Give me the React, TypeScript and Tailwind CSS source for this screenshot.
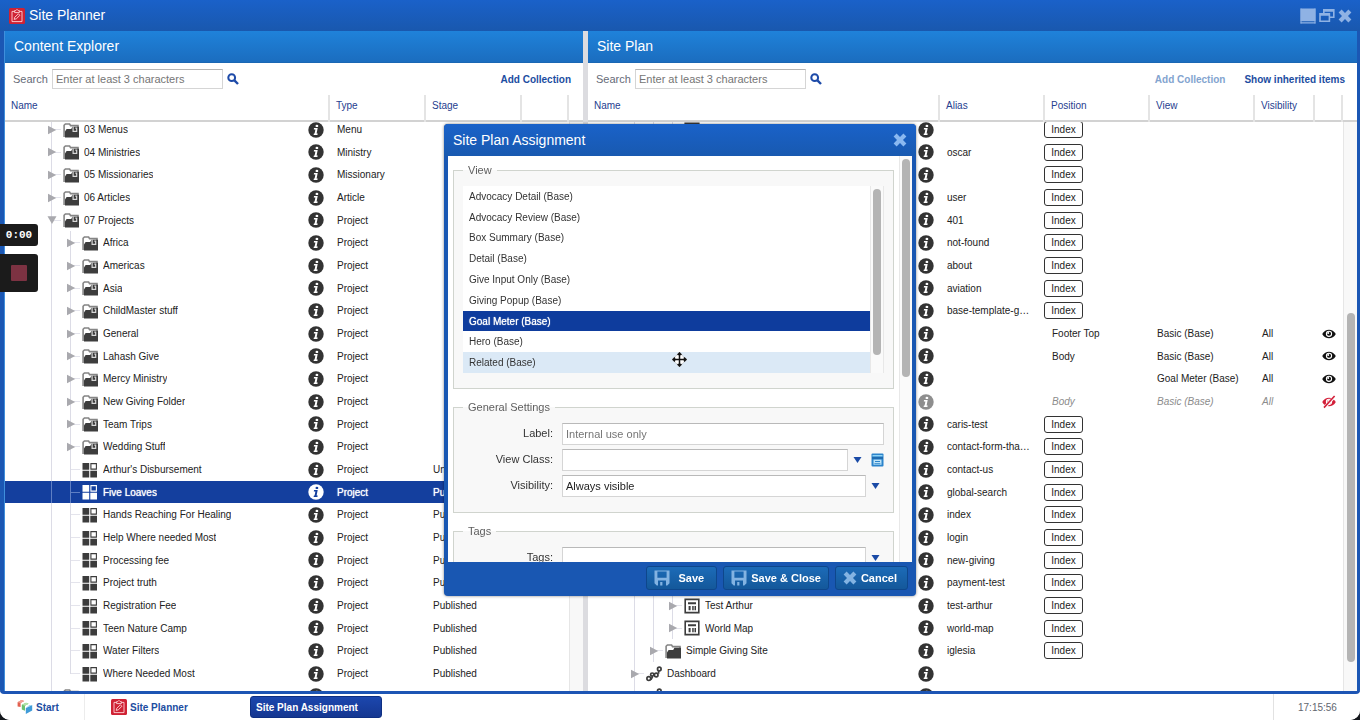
import { useState, type ReactNode } from 'react'

type IconKind = 'archive' | 'folder' | 'grid' | 'page' | 'path'

interface ContentItem {
  name: string
  type: string
  stage?: string
  depth: number
  icon: IconKind
  open?: boolean
}

interface PlanItem {
  name?: string
  depth?: number
  icon?: IconKind
  alias?: string
  index?: boolean
  position?: string
  view?: string
  hidden?: boolean
}

const folder = (name: string, type = 'Project', depth = 2, open = false): ContentItem => ({
  name,
  type,
  depth,
  icon: 'archive',
  open,
})

const project = (name: string, stage = 'Published'): ContentItem => ({
  name,
  type: 'Project',
  stage,
  depth: 2,
  icon: 'grid',
})

const contentItems: ContentItem[] = [
  folder('03 Menus', 'Menu', 1),
  folder('04 Ministries', 'Ministry', 1),
  folder('05 Missionaries', 'Missionary', 1),
  folder('06 Articles', 'Article', 1),
  folder('07 Projects', 'Project', 1, true),
  folder('Africa'),
  folder('Americas'),
  folder('Asia'),
  folder('ChildMaster stuff'),
  folder('General'),
  folder('Lahash Give'),
  folder('Mercy Ministry'),
  folder('New Giving Folder'),
  folder('Team Trips'),
  folder('Wedding Stuff'),
  project("Arthur's Disbursement", 'Unpublished'),
  project('Five Loaves'),
  project('Hands Reaching For Healing'),
  project('Help Where needed Most'),
  project('Processing fee'),
  project('Project truth'),
  project('Registration Fee'),
  project('Teen Nature Camp'),
  project('Water Filters'),
  project('Where Needed Most'),
  folder('', '', 1),
]

const planItems: PlanItem[] = [
  { index: true, depth: 3, icon: 'page' },
  { index: true, alias: 'oscar' },
  { index: true },
  { index: true, alias: 'user' },
  { index: true, alias: '401' },
  { index: true, alias: 'not-found' },
  { index: true, alias: 'about' },
  { index: true, alias: 'aviation' },
  { index: true, alias: 'base-template-g…' },
  { position: 'Footer Top', view: 'Basic (Base)' },
  { position: 'Body', view: 'Basic (Base)' },
  { view: 'Goal Meter (Base)' },
  { position: 'Body', view: 'Basic (Base)', hidden: true },
  { index: true, alias: 'caris-test' },
  { index: true, alias: 'contact-form-tha…' },
  { index: true, alias: 'contact-us' },
  { index: true, alias: 'global-search' },
  { index: true, alias: 'index' },
  { index: true, alias: 'login' },
  { index: true, alias: 'new-giving' },
  { index: true, alias: 'payment-test' },
  { index: true, alias: 'test-arthur', name: 'Test Arthur', depth: 3, icon: 'page' },
  { index: true, alias: 'world-map', name: 'World Map', depth: 3, icon: 'page' },
  { index: true, alias: 'iglesia', name: 'Simple Giving Site', depth: 2, icon: 'folder' },
  { name: 'Dashboard', depth: 1, icon: 'path' },
  { depth: 1, icon: 'path' },
]

const views = [
  'Advocacy Detail (Base)',
  'Advocacy Review (Base)',
  'Box Summary (Base)',
  'Detail (Base)',
  'Give Input Only (Base)',
  'Giving Popup (Base)',
  'Goal Meter (Base)',
  'Hero (Base)',
  'Related (Base)',
]

function TreeIcon({ kind }: { kind: IconKind }) {
  if (kind === 'grid') {
    return (
      <svg className="size-4 shrink-0" viewBox="0 0 16 16" fill="currentColor">
        <path d="M.5 1h6.7v6.7H.5zM.5 8.8h6.7v6.7H.5zM8.3 8.8H15v6.7H8.3z" />
        <path d="M8.9 1.6h5.5v5.5H8.9z" fill="none" stroke="currentColor" strokeWidth="1.1" />
      </svg>
    )
  }
  if (kind === 'page') {
    return (
      <svg className="size-4 shrink-0" viewBox="0 0 16 16" fill="currentColor">
        <path d="M1.2 1.4h13.6v13.2H1.2z" fill="none" stroke="currentColor" strokeWidth="1.6" />
        <path d="M4 4.3h8v1.9H4zM4.6 8h2v4.2h-2zM8.2 8h1.5v4.2H8.2zM10.5 8H12v4.2h-1.5z" />
      </svg>
    )
  }
  if (kind === 'path') {
    return (
      <svg className="size-4 shrink-0" viewBox="0 0 16 16" fill="none" stroke="currentColor" strokeWidth="1.7">
        <circle cx="2.8" cy="12.6" r="1.9" />
        <circle cx="6.2" cy="8.6" r="1.6" />
        <circle cx="10.2" cy="9" r="1.8" />
        <circle cx="13.3" cy="3" r="1.8" />
        <path d="M4.4 13.6c1.8-.4 1.2-2.6 2.6-3.2M12.6 5v2.8" />
      </svg>
    )
  }
  return (
    <svg className="size-4 shrink-0" viewBox="0 0 16 16">
      <path d="M1.1 15V3.3L2.4 2h4.2l1 1.6H15v2" fill="none" stroke="#858585" strokeWidth="1.6" />
      <path d="M2 15.6V9.4L3.6 7h4.6l1.2-2.2H16v10.8z" fill="#3d3d3d" />
      {kind === 'archive' && (
        <path d="M10.1 4.4v5h3.6V6.2h-1.4" fill="none" stroke="#d8d8d8" strokeWidth="1.2" />
      )}
    </svg>
  )
}

function InfoIcon({ selected = false, dim = false }: { selected?: boolean; dim?: boolean }) {
  const disc = selected ? '#fff' : dim ? '#8e8e8e' : '#333'
  const mark = selected ? '#143f9e' : '#fff'
  return (
    <svg className="size-4 shrink-0" viewBox="0 0 16 16">
      <circle cx="8" cy="8" r="7.7" fill={disc} />
      <ellipse cx="8.9" cy="3.9" rx="1.4" ry="1.2" fill={mark} />
      <path d="M6 6.1h3.7l-1.1 5.4h1.1l-.3 1.4H5.6l.3-1.4h.7l.8-4H5.8z" fill={mark} />
    </svg>
  )
}

function CrossIcon({ className }: { className: string }) {
  return (
    <svg className={className} viewBox="0 0 14 14" fill="currentColor">
      <path d="M3.6.6 7 4 10.4.6l3 3L10 7l3.4 3.4-3 3L7 10l-3.4 3.4-3-3L4 7 .6 3.6z" />
    </svg>
  )
}

function DiskIcon() {
  return (
    <svg className="size-4 text-[#83b3e2]" viewBox="0 0 16 16" fill="currentColor" fillRule="evenodd">
      <path d="M.5.5h15v12.8l-2.2 2.2H2.7L.5 13.3zM3.4 1.6v6.2h9.2V1.6zM4 10.4v5h2.2V12h2.2v3.4h3.6v-5z" />
    </svg>
  )
}

function ClipboardIcon() {
  return (
    <svg className="size-4 shrink-0" viewBox="0 0 16 16">
      <rect width="16" height="16" rx="1.5" fill="#cf2234" />
      <path d="M5.4 3.4H3v10.2h10V3.4h-2.4M5.6 2.6h1.2L8 1.4l1.2 1.2h1.2v2H5.6z" fill="none" stroke="#ffd5d8" strokeWidth=".9" />
      <path d="m5.2 11.4.5-2.1 3.7-3.5 1.5 1.5-3.6 3.5z" fill="none" stroke="#ffd5d8" strokeWidth=".9" />
    </svg>
  )
}

function EyeIcon({ off = false }: { off?: boolean }) {
  return (
    <svg className="h-4 w-[14px]" viewBox="0 0 14 16">
      <path d="M.2 8C3.4 2.2 10.6 2.2 13.8 8 10.6 13.8 3.4 13.8.2 8z" fill={off ? '#d3203a' : '#111'} />
      <circle cx="7" cy="7.8" r="2.6" fill="none" stroke="#fff" strokeWidth="1.1" />
      <circle cx="6.2" cy="7" r="1" fill="#fff" />
      {off && (
        <>
          <path d="M2 14 13 2" stroke="#fff" strokeWidth="3" />
          <path d="M2 13.6 12.6 2" stroke="#d3203a" strokeWidth="1.6" />
        </>
      )}
    </svg>
  )
}

function DownArrow() {
  return (
    <svg className="h-2 w-[9px]" viewBox="0 0 9 8" fill="#1a4aa6">
      <path d="M.5 1h8L4.5 7z" />
    </svg>
  )
}

interface TreeCellProps {
  name?: string
  depth?: number
  icon?: IconKind
  open?: boolean
  last?: boolean
  selected?: boolean
  dim?: boolean
}

function TreeCell({ name = '', depth = 1, icon, open, last, selected, dim }: TreeCellProps) {
  const leaf = icon === 'grid'
  return (
    <div className="flex h-full items-center pl-[37px] pr-[5px]">
      {Array.from({ length: depth }, (_, level) => {
        const own = level === depth - 1
        return (
          <span key={level} className="relative flex h-full w-[19px] shrink-0 items-center justify-center">
            <span
              className={`absolute left-[9px] top-0 w-px ${selected ? 'bg-[#5f7fc4]' : 'bg-[#dcdce6]'} ${own && last ? 'h-1/2' : 'h-full'}`}
            />
            {own && (
              <span className={`absolute left-[10px] h-px w-[9px] ${selected ? 'bg-[#5f7fc4]' : 'bg-[#e4e4ec]'}`} />
            )}
            {own && !leaf && (
              <svg className="relative h-[10px] w-[10px]" viewBox="0 0 10 10" fill="#a9a9ae">
                {open ? <path d="M.5 1.2h9L5 9z" /> : <path d="M1 .8v8.4L9.2 5z" />}
              </svg>
            )}
          </span>
        )
      })}
      <span className={`ml-[2px] flex w-4 shrink-0 ${selected ? 'text-white' : 'text-[#3c3c3c]'}`}>
        {icon && <TreeIcon kind={icon} />}
      </span>
      <span className="ml-[5px] truncate">{name}</span>
      <span className="ml-auto flex">
        <InfoIcon selected={selected} dim={dim} />
      </span>
    </div>
  )
}

function PanelTitle({ children }: { children: ReactNode }) {
  return (
    <h2 className="flex h-8 shrink-0 items-center border-b border-[#1a67b4] bg-linear-to-b from-[#1f82da] to-[#1b6dbf] px-[9px] text-[14px] text-white">
      {children}
    </h2>
  )
}

function SearchBar({ id, children }: { id: string; children: ReactNode }) {
  return (
    <div className="flex h-8 shrink-0 items-center pl-2 pr-3">
      <label htmlFor={id} className="w-[39px] text-[11px] text-[#666b78]">
        Search
      </label>
      <input
        id={id}
        type="text"
        placeholder="Enter at least 3 characters"
        className="h-5 w-[171px] border border-[#d5d5d5] border-t-[#b5b5b5] bg-white px-[3px] text-[11px] placeholder:text-[#757575]"
      />
      <button type="button" aria-label="Search" className="ml-1 flex">
        <svg className="size-3" viewBox="0 0 12 12" fill="none" stroke="#1d4aa8">
          <circle cx="4.7" cy="4.7" r="3.4" strokeWidth="2" />
          <path d="m7.4 7.4 3.6 3.6" strokeWidth="2.4" />
        </svg>
      </button>
      <div className="ml-auto flex gap-[19px] font-bold text-[#1c4da1]">{children}</div>
    </div>
  )
}

function ColumnHeader({ columns, widths }: { columns: string[]; widths: string[] }) {
  return (
    <table className="h-[27px] w-full shrink-0 table-fixed border-b-2 border-[#d2d2d2]">
      <thead>
        <tr>
          {columns.map((column, i) => (
            <th
              key={i}
              className={`${widths[i]} border-[#e4e4e4] pb-1 pl-[6px] text-left font-normal text-[#26408f] ${i > 0 ? 'border-l-2' : ''}`}
            >
              {column}
            </th>
          ))}
        </tr>
      </thead>
    </table>
  )
}

function ContentExplorer() {
  const [selected, setSelected] = useState('Five Loaves')

  return (
    <section className="flex w-[578px] shrink-0 flex-col">
      <PanelTitle>Content Explorer</PanelTitle>
      <SearchBar id="content-search">
        <button type="button">Add Collection</button>
      </SearchBar>
      <ColumnHeader
        columns={['Name', 'Type', 'Stage', '', '']}
        widths={['', 'w-24', 'w-24', 'w-[47px]', 'w-[15px]']}
      />
      <div className="flex min-h-0 flex-1 overflow-hidden">
        <div className="min-w-0 flex-1">
          <table className="-mt-1 w-full table-fixed">
            <colgroup>
              <col />
              <col className="w-24" />
              <col className="w-24" />
              <col className="w-12" />
            </colgroup>
            <tbody>
              {contentItems.map((item, i) => {
                const active = item.name === selected
                return (
                  <tr
                    key={i}
                    onClick={() => setSelected(item.name)}
                    className={`h-[23px] nth-[3n+2]:h-[22px] ${active ? 'bg-[#143f9e] text-white [text-shadow:0_0_1px_#fff]' : ''}`}
                  >
                    <td className="h-px">
                      <TreeCell
                        name={item.name}
                        depth={item.depth}
                        icon={item.icon}
                        open={item.open}
                        last={i === contentItems.length - 2}
                        selected={active}
                      />
                    </td>
                    <td className="pl-2">{item.type}</td>
                    <td className="truncate pl-2">{item.stage}</td>
                    <td />
                  </tr>
                )
              })}
            </tbody>
          </table>
        </div>
        <div className="w-[14px] border-l border-[#e6e6e6] bg-[#f8f8f8]" />
      </div>
    </section>
  )
}

function SitePlan() {
  return (
    <section className="flex min-w-0 flex-1 flex-col">
      <PanelTitle>Site Plan</PanelTitle>
      <SearchBar id="plan-search">
        <button type="button" disabled className="text-[#83a4cf]">
          Add Collection
        </button>
        <button type="button">Show inherited items</button>
      </SearchBar>
      <ColumnHeader
        columns={['Name', 'Alias', 'Position', 'View', 'Visibility', '', '']}
        widths={['', 'w-[105px]', 'w-[105px]', 'w-[105px]', 'w-[60px]', 'w-[28px]', 'w-[15px]']}
      />
      <div className="flex min-h-0 flex-1 overflow-hidden">
        <div className="min-w-0 flex-1">
          <table className="-mt-1 w-full table-fixed">
            <colgroup>
              <col />
              <col className="w-[105px]" />
              <col className="w-[105px]" />
              <col className="w-[105px]" />
              <col className="w-[60px]" />
              <col className="w-[29px]" />
            </colgroup>
            <tbody>
              {planItems.map((item, i) => (
                <tr
                  key={i}
                  className={`h-[23px] nth-[3n+2]:h-[22px] ${item.hidden ? 'italic text-[#8c8c8c]' : ''}`}
                >
                  <td className="h-px">
                    <TreeCell name={item.name} depth={item.depth} icon={item.icon} dim={item.hidden} />
                  </td>
                  <td className="truncate pl-2">{item.alias}</td>
                  <td className={item.index ? '' : 'pl-2'}>
                    {item.index ? (
                      <button
                        type="button"
                        className="block h-[17px] w-[39px] rounded-[3px] border border-[#333] bg-white leading-[15px]"
                      >
                        Index
                      </button>
                    ) : (
                      item.position
                    )}
                  </td>
                  <td className="whitespace-nowrap pl-2">{item.view}</td>
                  <td className="pl-2">{item.view && 'All'}</td>
                  <td className="pl-2">{item.view && <EyeIcon off={item.hidden} />}</td>
                </tr>
              ))}
            </tbody>
          </table>
        </div>
        <div className="flex w-[14px] justify-center border-l border-[#e6e6e6] bg-[#f8f8f8] pt-[191px]">
          <div className="h-[349px] w-2 rounded-full bg-[#b4b4b4]" />
        </div>
      </div>
    </section>
  )
}

function Fieldset({ title, children }: { title: string; children: ReactNode }) {
  return (
    <fieldset className="mb-[10px] flex flex-col gap-1 border border-[#d0d4ce] bg-[#f8f8f8] px-[9px] pb-[15px] pt-2">
      <legend className="h-4 bg-linear-to-b from-white from-50% to-[#f8f8f8] to-50% px-[5px] text-[11px] leading-4 text-[#5f5f5f]">
        {title}
      </legend>
      {children}
    </fieldset>
  )
}

function Field({ id, label, children }: { id: string; label: string; children: ReactNode }) {
  return (
    <div className="flex h-[22px] items-center">
      <label htmlFor={id} className="w-[90px] shrink-0 pb-[2px] text-right text-[11px] text-[#333]">
        {label}
      </label>
      <div className="ml-[9px] flex min-w-0 flex-1 items-center">{children}</div>
    </div>
  )
}

const inputClass =
  'h-[22px] min-w-0 flex-1 appearance-none rounded-none border border-[#d5d5d5] border-t-[#b9b9b9] bg-white px-[3px] text-[11px] text-[#222] placeholder:text-[#757575]'

function DialogButton({ icon, children }: { icon: ReactNode; children: ReactNode }) {
  return (
    <button
      type="button"
      className="flex h-6 items-center gap-1 rounded-[3px] border border-[#0e478c] bg-linear-to-b from-[#1c6bb8] to-[#14589a] px-[7px] text-[11px] font-bold text-white"
    >
      {icon}
      {children}
    </button>
  )
}

function AssignmentDialog() {
  const [view, setView] = useState('Goal Meter (Base)')

  return (
    <div
      role="dialog"
      aria-label="Site Plan Assignment"
      className="pointer-events-auto flex h-[472px] w-[472px] flex-col overflow-hidden rounded-[4px] bg-[#1957b2] shadow-[0_0_3px_rgba(0,0,0,0.5)]"
    >
      <header className="flex h-8 shrink-0 items-center justify-between bg-linear-to-b from-[#1a62c9] to-[#1859b0] pl-[9px] pr-[9px] text-white">
        <h2 className="text-[14px]">Site Plan Assignment</h2>
        <button type="button" aria-label="Close" className="text-[#8ab8f0]">
          <CrossIcon className="size-[14px]" />
        </button>
      </header>

      <div className="mx-1 flex min-h-0 flex-1 overflow-hidden bg-white">
        <div className="min-w-0 flex-1 px-[5px] pt-[6px]">
          <Fieldset title="View">
            <div className="flex">
              <ul role="listbox" aria-label="View" className="grid h-[187px] flex-1 auto-rows-fr bg-white">
                {views.map(name => (
                  <li key={name} className="flex">
                    <button
                      type="button"
                      role="option"
                      aria-selected={name === view}
                      onClick={() => setView(name)}
                      className={`relative flex flex-1 items-center pl-[6px] text-left ${
                        name === view
                          ? 'bg-[#0e3c9d] text-white [text-shadow:0_0_1px_#fff]'
                          : name === 'Related (Base)'
                            ? 'bg-[#dbe9f6] text-[#333]'
                            : 'text-[#333]'
                      }`}
                    >
                      {name}
                      {name === 'Related (Base)' && (
                        <svg className="absolute left-[209px] top-0 size-[15px]" viewBox="0 0 15 15">
                          <path
                            d="M7.5 0 11 4v1l4 2.5L11 11l-3.5 4L4 11 0 7.5 4 4z"
                            fill="#fff"
                            stroke="#bbb"
                            strokeWidth=".6"
                          />
                          <path
                            d="M7.5 1v13M1 7.5h13M5.6 3l1.9-2 1.9 2M5.6 12l1.9 2 1.9-2M3 5.6l-2 1.9 2 1.9M12 5.6l2 1.9-2 1.9"
                            fill="none"
                            stroke="#111"
                            strokeWidth="1.5"
                          />
                        </svg>
                      )}
                    </button>
                  </li>
                ))}
              </ul>
              <div className="flex w-[14px] justify-center border-x border-[#e8e8e8] bg-[#fafafa] pt-[3px]">
                <div className="h-[166px] w-2 rounded-full bg-[#b4b4b4]" />
              </div>
            </div>
          </Fieldset>

          <Fieldset title="General Settings">
            <Field id="label" label="Label:">
              <input id="label" type="text" placeholder="Internal use only" className={inputClass} />
            </Field>
            <Field id="view-class" label="View Class:">
              <input id="view-class" type="text" className={inputClass} />
              <button type="button" aria-label="Show view classes" className="flex w-[18px] justify-center">
                <DownArrow />
              </button>
              <button type="button" aria-label="Browse view classes" className="ml-[5px] flex">
                <svg className="h-[14px] w-[13px]" viewBox="0 0 13 14">
                  <rect x=".5" y=".5" width="12" height="13" rx="1" fill="#2b84cc" />
                  <path d="M1.5 2h10v1.4h-10z" fill="#8ed3f5" />
                  <path d="M1 4.4h11v1.2H1z" fill="#175a9d" />
                  <path d="M2.5 6.6h8v5.2h-8z" fill="#bfe4f7" />
                  <path d="M4 8h5v1H4zM3.4 10.2h6v1h-6z" fill="#2b84cc" />
                </svg>
              </button>
            </Field>
            <Field id="visibility" label="Visibility:">
              <select id="visibility" defaultValue="always" className={inputClass}>
                <option value="always">Always visible</option>
              </select>
              <span className="flex w-[18px] justify-center">
                <DownArrow />
              </span>
            </Field>
          </Fieldset>

          <Fieldset title="Tags">
            <Field id="tags" label="Tags:">
              <input id="tags" type="text" className={inputClass} />
              <button type="button" aria-label="Show tags" className="flex w-[18px] justify-center">
                <DownArrow />
              </button>
            </Field>
          </Fieldset>
        </div>
        <div className="flex w-[13px] justify-center border-l border-[#e8e8e8] bg-[#fafafa] pt-[3px]">
          <div className="h-[218px] w-2 rounded-full bg-[#b4b4b4]" />
        </div>
      </div>

      <footer className="flex h-[34px] shrink-0 items-center justify-end gap-[6px] px-2 pb-[2px]">
        <DialogButton icon={<DiskIcon />}>
          <span className="px-[5px]">Save</span>
        </DialogButton>
        <DialogButton icon={<DiskIcon />}>Save &amp; Close</DialogButton>
        <DialogButton icon={<CrossIcon className="size-[14px] text-[#83b3e2]" />}>
          <span className="pr-[3px]">Cancel</span>
        </DialogButton>
      </footer>
    </div>
  )
}

function Taskbar() {
  return (
    <nav className="flex h-[26px] shrink-0 items-center bg-white font-bold text-[#1c4da1]">
      <div className="flex h-full w-[85px] items-center border-r border-[#ececec] pl-[17px]">
        <button type="button" className="flex items-center gap-[3px]">
          <svg className="size-4" viewBox="0 0 16 16">
            <path d="M.6 3.2 4.4 1l2.8 1-3.6 2v4L.6 7.4z" fill="#e2604f" />
            <path d="m4.4 1 2.8 1-3.6 2-3-.8z" fill="#f2a399" />
            <path d="m4.8 5.8 4.2-2 2.6 1-3.6 2v5l-3.2-1.2z" fill="#6cc070" />
            <path d="m9 3.8 2.6 1-3.6 2-3.2-1z" fill="#b4e2a8" />
            <path d="m8.8 9 6.4-3v5.6l-6.4 3.4z" fill="#3f9bd8" />
            <path d="m8.8 9 3.6-3 2.8 0z" fill="#9ad4f2" />
          </svg>
          Start
        </button>
      </div>
      <button type="button" className="ml-[26px] flex w-[139px] items-center gap-[3px]">
        <ClipboardIcon />
        Site Planner
      </button>
      <button
        type="button"
        className="h-[22px] w-[132px] rounded-[3px] border border-[#0e2f82] bg-linear-to-b from-[#1c47ae] to-[#153791] px-[5px] text-left text-white"
      >
        Site Plan Assignment
      </button>
      <time className="ml-auto flex h-full w-[87px] items-center border-l border-[#e2e2e2] pl-6 font-normal text-[#62666f]">
        17:15:56
      </time>
    </nav>
  )
}

function Recorder() {
  return (
    <div className="fixed left-0 top-[224px] flex w-[38px] flex-col gap-2">
      <div className="flex h-[22px] items-center justify-center rounded-r-[3px] bg-[#1b1b1b] font-['Liberation_Mono',monospace] text-[11px] font-bold text-white">
        0:00
      </div>
      <button
        type="button"
        aria-label="Stop recording"
        className="flex h-[38px] items-center justify-center rounded-r-[3px] bg-[#1b1b1b]"
      >
        <span className="size-4 rounded-[1px] bg-[#7c3242]" />
      </button>
    </div>
  )
}

export default function App() {
  return (
    <div className="h-screen bg-[#14171c] font-['Liberation_Sans',Arial,sans-serif] text-[10px] text-[#222]">
      <div className="flex h-full flex-col overflow-hidden rounded-b-[10px] bg-white">
        <main className="flex min-h-0 flex-1 flex-col rounded-b-[4px] border-b-3 border-[#1d55b4] bg-[#1b57b4]">
          <header className="flex h-[31px] shrink-0 items-center bg-linear-to-b from-[#1a61c9] to-[#1958ae] pl-[9px] pr-2 text-white">
            <ClipboardIcon />
            <h1 className="ml-[4px] text-[14px]">Site Planner</h1>
            <div className="ml-auto flex items-center gap-[3px] text-[#8fb2e4]">
              <button type="button" aria-label="Minimize">
                <svg className="size-4" viewBox="0 0 16 16" fill="currentColor">
                  <path d="M.5.5h15v12.7H.5zM.5 14.2h15v1.4H.5z" />
                  <path d="M.5.5h1v15h-1zM14.5.5h1v15h-1z" />
                </svg>
              </button>
              <button type="button" aria-label="Restore">
                <svg className="size-4" viewBox="0 0 16 16" fill="none" stroke="currentColor" strokeWidth="1.6">
                  <path d="M1 5.8h9.4v7.4H1zM1 7h9.4M4.8 5V1.8h10v7.4h-3.6M4.8 3h10" />
                </svg>
              </button>
              <button type="button" aria-label="Close">
                <CrossIcon className="size-[14px]" />
              </button>
            </div>
          </header>
          <div className="ml-1 mr-[3px] flex min-h-0 flex-1 border-l border-[#3f8fdc] bg-white">
            <ContentExplorer />
            <div className="w-[5px] shrink-0 bg-[#dcdce0]" />
            <SitePlan />
          </div>
        </main>
        <Taskbar />
      </div>
      <Recorder />
      <div className="pointer-events-none fixed inset-0 flex items-center justify-center">
        <AssignmentDialog />
      </div>
    </div>
  )
}
